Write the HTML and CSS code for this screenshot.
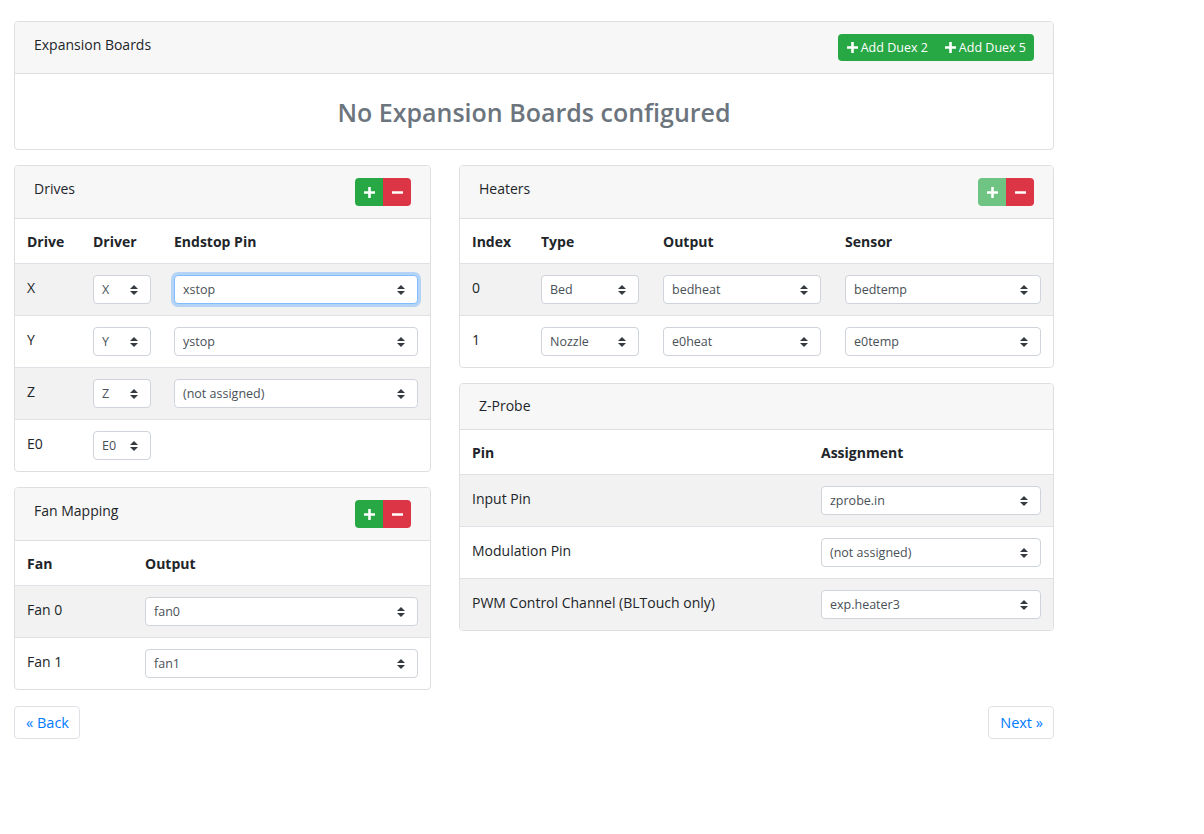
FILE: index.html
```html
<!DOCTYPE html>
<html lang="en">
<head>
<meta charset="utf-8">
<title>Expansion Boards</title>
<link rel="stylesheet" href="styles.css">
</head>
<body>
<div class="page">
  <section class="card">
    <header class="card-header">
      <span class="card-title">Expansion Boards</span>
      <div class="btn-group">
        <button class="btn-add"><svg class="ico-plus" viewBox="0 0 12 12"><path d="M4.6 0h2.8v4.6H12v2.8H7.4V12H4.6V7.4H0V4.6h4.6z"/></svg>Add Duex 2</button>
        <button class="btn-add"><svg class="ico-plus" viewBox="0 0 12 12"><path d="M4.6 0h2.8v4.6H12v2.8H7.4V12H4.6V7.4H0V4.6h4.6z"/></svg>Add Duex 5</button>
      </div>
    </header>
    <div class="card-body empty">
      <h3>No Expansion Boards configured</h3>
    </div>
  </section>

  <div class="columns">
    <div class="col">
      <section class="card">
        <header class="card-header">
          <span class="card-title">Drives</span>
          <div class="btn-group">
            <button class="icon-btn green"><svg class="ico" viewBox="0 0 12 12"><path d="M4.6 0h2.8v4.6H12v2.8H7.4V12H4.6V7.4H0V4.6h4.6z"/></svg></button>
            <button class="icon-btn red"><svg class="ico" viewBox="0 0 12 12"><path d="M0 4.6h12v2.8H0z"/></svg></button>
          </div>
        </header>
        <table class="table drives">
          <thead><tr><th class="w-drive">Drive</th><th class="w-driver">Driver</th><th>Endstop Pin</th></tr></thead>
          <tbody>
            <tr>
              <td>X</td>
              <td><div class="select small"><select><option>X</option></select><svg class="caret" viewBox="0 0 4 5"><path d="M2 0L0 2h4zm0 5L0 3h4z"/></svg></div></td>
              <td><div class="select focus"><select><option>xstop</option></select><svg class="caret" viewBox="0 0 4 5"><path d="M2 0L0 2h4zm0 5L0 3h4z"/></svg></div></td>
            </tr>
            <tr>
              <td>Y</td>
              <td><div class="select small"><select><option>Y</option></select><svg class="caret" viewBox="0 0 4 5"><path d="M2 0L0 2h4zm0 5L0 3h4z"/></svg></div></td>
              <td><div class="select"><select><option>ystop</option></select><svg class="caret" viewBox="0 0 4 5"><path d="M2 0L0 2h4zm0 5L0 3h4z"/></svg></div></td>
            </tr>
            <tr>
              <td>Z</td>
              <td><div class="select small"><select><option>Z</option></select><svg class="caret" viewBox="0 0 4 5"><path d="M2 0L0 2h4zm0 5L0 3h4z"/></svg></div></td>
              <td><div class="select"><select><option>(not assigned)</option></select><svg class="caret" viewBox="0 0 4 5"><path d="M2 0L0 2h4zm0 5L0 3h4z"/></svg></div></td>
            </tr>
            <tr>
              <td>E0</td>
              <td><div class="select small"><select><option>E0</option></select><svg class="caret" viewBox="0 0 4 5"><path d="M2 0L0 2h4zm0 5L0 3h4z"/></svg></div></td>
              <td></td>
            </tr>
          </tbody>
        </table>
      </section>

      <section class="card">
        <header class="card-header">
          <span class="card-title">Fan Mapping</span>
          <div class="btn-group">
            <button class="icon-btn green"><svg class="ico" viewBox="0 0 12 12"><path d="M4.6 0h2.8v4.6H12v2.8H7.4V12H4.6V7.4H0V4.6h4.6z"/></svg></button>
            <button class="icon-btn red"><svg class="ico" viewBox="0 0 12 12"><path d="M0 4.6h12v2.8H0z"/></svg></button>
          </div>
        </header>
        <table class="table fans">
          <thead><tr><th class="w-fan">Fan</th><th>Output</th></tr></thead>
          <tbody>
            <tr>
              <td>Fan 0</td>
              <td><div class="select"><select><option>fan0</option></select><svg class="caret" viewBox="0 0 4 5"><path d="M2 0L0 2h4zm0 5L0 3h4z"/></svg></div></td>
            </tr>
            <tr>
              <td>Fan 1</td>
              <td><div class="select"><select><option>fan1</option></select><svg class="caret" viewBox="0 0 4 5"><path d="M2 0L0 2h4zm0 5L0 3h4z"/></svg></div></td>
            </tr>
          </tbody>
        </table>
      </section>
    </div>

    <div class="col">
      <section class="card">
        <header class="card-header">
          <span class="card-title">Heaters</span>
          <div class="btn-group">
            <button class="icon-btn green disabled"><svg class="ico" viewBox="0 0 12 12"><path d="M4.6 0h2.8v4.6H12v2.8H7.4V12H4.6V7.4H0V4.6h4.6z"/></svg></button>
            <button class="icon-btn red"><svg class="ico" viewBox="0 0 12 12"><path d="M0 4.6h12v2.8H0z"/></svg></button>
          </div>
        </header>
        <table class="table heaters">
          <thead><tr><th class="w-index">Index</th><th class="w-type">Type</th><th class="w-output">Output</th><th>Sensor</th></tr></thead>
          <tbody>
            <tr>
              <td>0</td>
              <td><div class="select"><select><option>Bed</option></select><svg class="caret" viewBox="0 0 4 5"><path d="M2 0L0 2h4zm0 5L0 3h4z"/></svg></div></td>
              <td><div class="select"><select><option>bedheat</option></select><svg class="caret" viewBox="0 0 4 5"><path d="M2 0L0 2h4zm0 5L0 3h4z"/></svg></div></td>
              <td><div class="select"><select><option>bedtemp</option></select><svg class="caret" viewBox="0 0 4 5"><path d="M2 0L0 2h4zm0 5L0 3h4z"/></svg></div></td>
            </tr>
            <tr>
              <td>1</td>
              <td><div class="select"><select><option>Nozzle</option></select><svg class="caret" viewBox="0 0 4 5"><path d="M2 0L0 2h4zm0 5L0 3h4z"/></svg></div></td>
              <td><div class="select"><select><option>e0heat</option></select><svg class="caret" viewBox="0 0 4 5"><path d="M2 0L0 2h4zm0 5L0 3h4z"/></svg></div></td>
              <td><div class="select"><select><option>e0temp</option></select><svg class="caret" viewBox="0 0 4 5"><path d="M2 0L0 2h4zm0 5L0 3h4z"/></svg></div></td>
            </tr>
          </tbody>
        </table>
      </section>

      <section class="card">
        <header class="card-header plain">
          <span class="card-title">Z-Probe</span>
        </header>
        <table class="table probe">
          <thead><tr><th class="w-pin">Pin</th><th>Assignment</th></tr></thead>
          <tbody>
            <tr>
              <td>Input Pin</td>
              <td><div class="select"><select><option>zprobe.in</option></select><svg class="caret" viewBox="0 0 4 5"><path d="M2 0L0 2h4zm0 5L0 3h4z"/></svg></div></td>
            </tr>
            <tr>
              <td>Modulation Pin</td>
              <td><div class="select"><select><option>(not assigned)</option></select><svg class="caret" viewBox="0 0 4 5"><path d="M2 0L0 2h4zm0 5L0 3h4z"/></svg></div></td>
            </tr>
            <tr>
              <td>PWM Control Channel (BLTouch only)</td>
              <td><div class="select"><select><option>exp.heater3</option></select><svg class="caret" viewBox="0 0 4 5"><path d="M2 0L0 2h4zm0 5L0 3h4z"/></svg></div></td>
            </tr>
          </tbody>
        </table>
      </section>
    </div>
  </div>

  <nav class="pager">
    <button class="btn-outline">« Back</button>
    <button class="btn-outline">Next »</button>
  </nav>
</div>
</body>
</html>
```

FILE: styles.css
```css
* { box-sizing: border-box; }

body {
  margin: 0;
  background: #fff;
  color: #212529;
  font-family: "Open Sans", "Noto Sans", sans-serif;
  font-size: 14px;
  line-height: 24px;
}

.page {
  width: 1040px;
  margin: 21px 0 0 14px;
}

button {
  font-family: inherit;
  cursor: pointer;
}

/* cards */
.card {
  background: #fff;
  border: 1px solid #dfdfdf;
  border-radius: 4px;
  overflow: hidden;
}

.card-header {
  display: flex;
  justify-content: space-between;
  align-items: flex-start;
  padding: 12px 19px;
  background: #f7f7f7;
  border-bottom: 1px solid #dfdfdf;
}

.card-header.plain {
  padding: 11px 19px 10px;
}

.card-title {
  line-height: 22px;
  padding-bottom: 2px;
}

.card-body.empty {
  padding: 21px 20px 20px;
  text-align: center;
}

.card-body.empty h3 {
  margin: 0;
  font-size: 25px;
  line-height: 34px;
  font-weight: 600;
  color: #6c757d;
}

/* buttons */
.btn-group {
  display: flex;
  border-radius: 4px;
  overflow: hidden;
}

.btn-add {
  display: flex;
  align-items: center;
  gap: 3px;
  height: 27px;
  padding: 0 8px 0 9px;
  border: 0;
  background: #28a745;
  color: #fff;
  font-size: 12.5px;
  line-height: 19px;
}

.ico-plus {
  width: 11px;
  height: 11px;
  fill: #fff;
}

.icon-btn {
  display: flex;
  align-items: center;
  justify-content: center;
  width: 28px;
  height: 28px;
  padding: 0;
  border: 0;
}

.icon-btn .ico {
  width: 11px;
  height: 11px;
  fill: #fff;
}

.icon-btn.green { background: #28a745; }
.icon-btn.green.disabled { background: #6fc383; cursor: default; }
.icon-btn.red { background: #dc3545; }

/* layout */
.columns {
  display: grid;
  grid-template-columns: 417px 595px;
  column-gap: 28px;
  margin-top: 15px;
  align-items: start;
}

.col {
  display: flex;
  flex-direction: column;
  gap: 15px;
}

/* tables */
.table {
  width: 100%;
  border-collapse: collapse;
  table-layout: fixed;
}

.table th {
  text-align: left;
  font-weight: 700;
  padding: 11px 12px 9px;
  border-bottom: 1px solid #dee2e6;
}

.table td {
  padding: 11px 12px;
  line-height: 26px;
  vertical-align: top;
}

.table tbody tr + tr td {
  border-top: 1px solid #dee2e6;
}

.table tbody tr:nth-child(odd) {
  background: #f2f2f2;
}

.w-drive { width: 66px; }
.w-driver { width: 81px; }
.w-fan { width: 118px; }
.w-index { width: 69px; }
.w-type { width: 122px; }
.w-output { width: 182px; }
.w-pin { width: 349px; }

/* selects */
.select {
  display: flex;
  align-items: center;
  height: 29px;
  padding: 1px 12px 0 8px;
  background: #fff;
  border: 1px solid #ced4da;
  border-radius: 4px;
}

.select.small {
  width: 58px;
}

.select.focus {
  border-color: #80bdff;
  box-shadow: 0 0 0 3px rgba(0, 123, 255, 0.25);
}

.select select {
  flex: 1;
  min-width: 0;
  appearance: none;
  -webkit-appearance: none;
  border: 0;
  background: transparent;
  padding: 0;
  margin: 0;
  font-family: inherit;
  font-size: 12.5px;
  line-height: 20px;
  color: #495057;
  outline: none;
}

.caret {
  flex: none;
  width: 8px;
  height: 10px;
  fill: #343a40;
}

/* pager */
.pager {
  display: flex;
  justify-content: space-between;
  margin-top: 16px;
}

.btn-outline {
  height: 33px;
  padding: 0 10px 0 11px;
  background: #fff;
  border: 1px solid #dee2e6;
  border-radius: 4px;
  color: #007bff;
  font-size: 14.5px;
  line-height: 23px;
}
```
